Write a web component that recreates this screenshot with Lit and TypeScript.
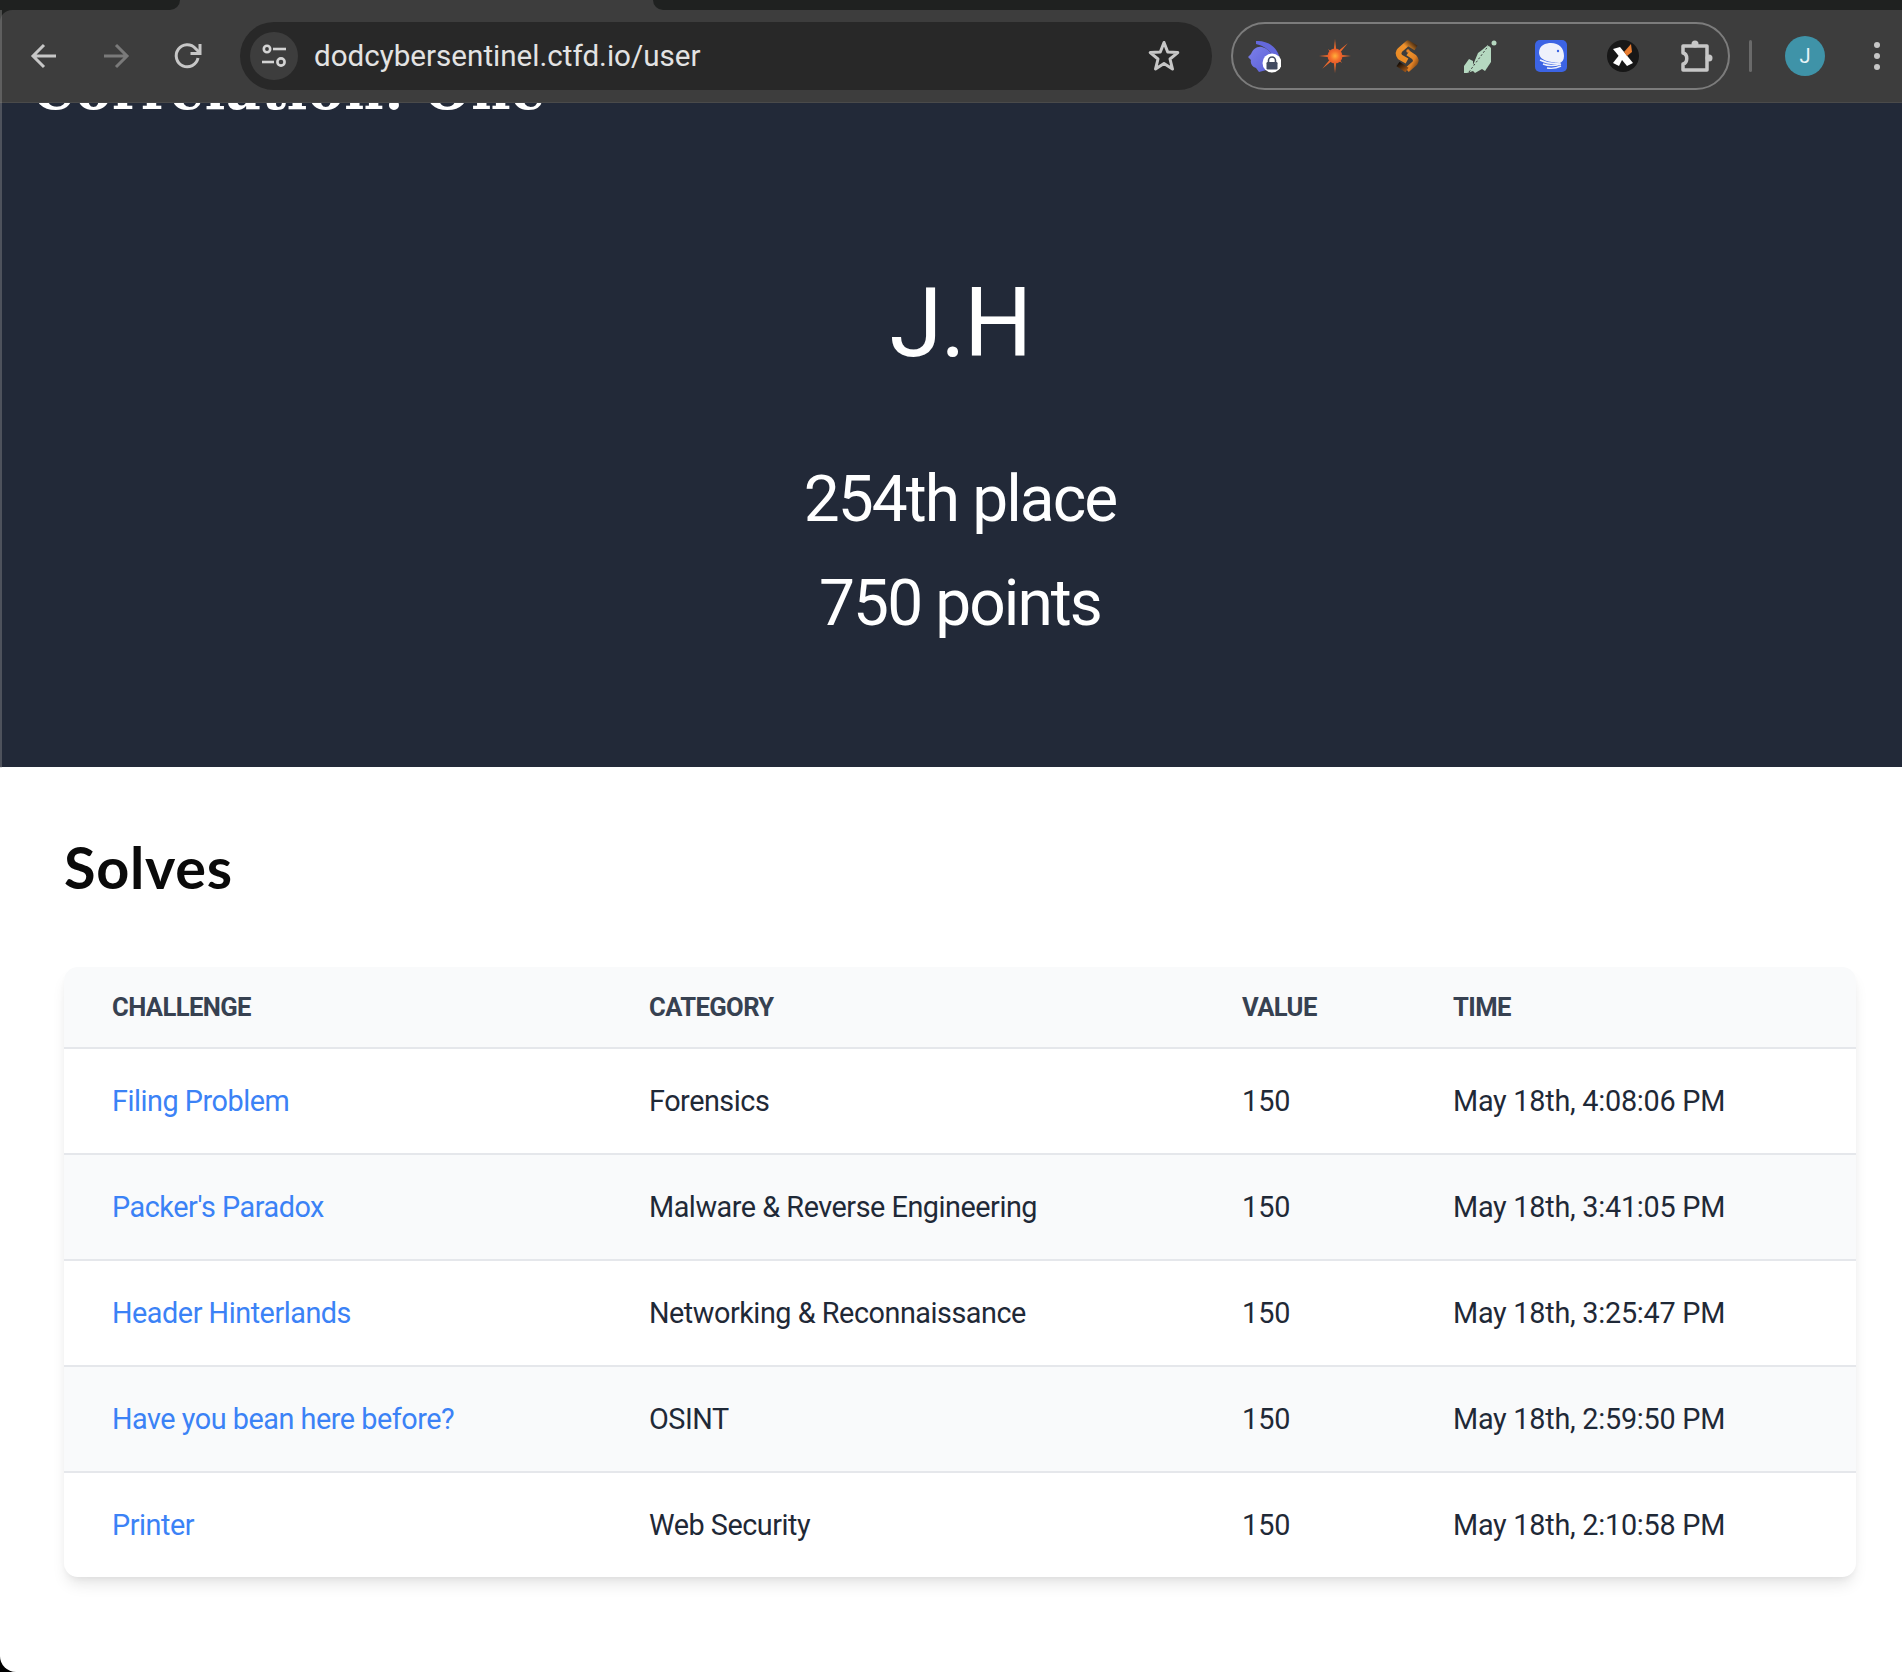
import { LitElement, html, svg, css } from 'lit';
import { customElement } from 'lit/decorators.js';

// thin tapered ray for the burst icon
const ray = (angle: number, len: number) =>
  svg`<polygon points="-1.800,0 0,${-len} 1.800,0" transform="translate(18 18) rotate(${angle})" fill="#ee6a2c"/>`;

const extensionIcons = [
  // rabbit with lock badge
  svg`<svg width="36" height="36" viewBox="0 0 36 36">
    <defs><linearGradient id="rab" x1="0" y1="0" x2="1" y2="1"><stop offset="0" stop-color="#7c80ea"/><stop offset="1" stop-color="#5a5ed6"/></linearGradient></defs>
    <path d="M11 3 C20 2 32 7 35 21 L29 21 C27 14 20 8 11 6 Z" fill="#6468dc"/>
    <path d="M17 9 C25 11 29 18 28 26 C26 31 20 33 14 34 L11 30 C7 29 5 25 6 22 L3 19 L6 16 C8 11 12 8 17 9 Z" fill="url(#rab)"/>
    <circle cx="27" cy="25" r="9.500" fill="#fff"/>
    <path d="M23.500 24 V22.500 a3.500 3.500 0 0 1 7 0 V24" fill="none" stroke="#414a60" stroke-width="1.600"/>
    <rect x="21.500" y="24" width="11" height="7.500" rx="1.200" fill="#414a60"/>
  </svg>`,
  // orange burst
  svg`<svg width="36" height="36" viewBox="0 0 36 36">
    <defs><radialGradient id="burst"><stop offset="0" stop-color="#ffb03a"/><stop offset=".6" stop-color="#f4702c"/><stop offset="1" stop-color="#e4582a"/></radialGradient></defs>
    ${[
      [0, 17],
      [45, 18],
      [90, 16],
      [135, 10],
      [180, 17],
      [225, 18],
      [270, 16],
      [315, 10],
    ].map(([a, l]) => ray(a, l))}
    <circle cx="18" cy="18" r="7.500" fill="url(#burst)"/>
  </svg>`,
  // chain S
  svg`<svg width="36" height="36" viewBox="0 0 36 36">
    <defs>
      <linearGradient id="sa" x1="1" y1="0" x2="0" y2="1"><stop offset="0" stop-color="#2c1a0c"/><stop offset=".4" stop-color="#f0922c"/><stop offset="1" stop-color="#e88a24"/></linearGradient>
      <linearGradient id="sb" x1="0" y1="0" x2="1" y2="1"><stop offset="0" stop-color="#f0962c"/><stop offset=".6" stop-color="#e08024"/><stop offset="1" stop-color="#7a4414"/></linearGradient>
      <linearGradient id="sc" x1="0" y1="0" x2="1" y2="1"><stop offset="0" stop-color="#140c06"/><stop offset="1" stop-color="#9a5418"/></linearGradient>
    </defs>
    <path d="M27 10 L19 5 L11 12 Q8 15 11 19 L18 23" fill="none" stroke="url(#sa)" stroke-width="5.500" stroke-linejoin="round"/>
    <path d="M19 15 L25 19 Q28 22 26 25 L18 32" fill="none" stroke="url(#sb)" stroke-width="5.500" stroke-linejoin="round"/>
    <path d="M9 26 L18 32" fill="none" stroke="url(#sc)" stroke-width="5.500"/>
    <circle cx="19" cy="13" r="1.700" fill="#e8862a"/>
  </svg>`,
  // green leaf strips
  svg`<svg width="36" height="36" viewBox="0 0 36 36">
    <g fill="#b5d8c0">
      <path d="M3 35 V28 L8 21 L12 23 V33 L6 35 Z"/>
      <path d="M12 27 L17 15 L21 12 V31 L14 35 L12 33 Z"/>
      <path d="M21 12 L27 7 L30 10 V24 L24 33 L21 31 Z"/>
      <circle cx="33" cy="5" r="2.500"/>
    </g>
    <path d="M8 34 L28 7" stroke="#3d3d3d" stroke-width="1" stroke-dasharray="2 2" fill="none"/>
  </svg>`,
  // whale on blue
  svg`<svg width="36" height="36" viewBox="0 0 36 36">
    <rect x="2" y="2" width="32" height="32" rx="5" fill="#3c64e4"/>
    <path d="M6 15 C6 7 13 5 18 5 C26 5 31 10 31 18 C31 22 29 24 27 25 C19 24 7 24 6 15 Z" fill="#eef1fb"/>
    <circle cx="25" cy="13" r="1.200" fill="#3c64e4"/>
    <g fill="none" stroke="#eef1fb" stroke-width="1.400">
      <path d="M7 22 C13 25 21 26 27 25"/>
      <path d="M10 26 C15 28 21 28 28 26"/>
      <path d="M14 30 C19 31 24 30 28 28"/>
    </g>
  </svg>`,
  // X with rocket
  svg`<svg width="36" height="36" viewBox="0 0 36 36">
    <circle cx="18" cy="18" r="16" fill="#171717"/>
    <path d="M8 11 L15 9 L28 25 L22 28 Z" fill="#fff"/>
    <path d="M8 25 L15 16 L18 20 L14 28 Z" fill="#fff"/>
    <path d="M26 6 L27 14 L22 18 L19 14 Z" fill="#e87c30"/>
  </svg>`,
  // extension puzzle
  svg`<svg width="36" height="36" viewBox="0 0 36 36">
    <path d="M6 8 H30 V32 H6 V26 C11 25 11 16 6 15 Z" fill="none" stroke="#c7c7c7" stroke-width="3.500" stroke-linejoin="round"/>
    <circle cx="18" cy="6" r="3.500" fill="#c7c7c7"/>
    <circle cx="32" cy="20" r="3.500" fill="#c7c7c7"/>
  </svg>`,
];

@customElement('browser-bar')
export class BrowserBar extends LitElement {
  static styles = css`
    :host {
      display: block;
      width: 1920px;
      background: #1f2120;
    }

    .tabs {
      display: flex;
      justify-content: space-between;
      height: 10px;
      background: #3d3d3d;
    }

    .tab-left {
      width: 180px;
      background: #1f2120;
      border-bottom-right-radius: 12px;
    }

    .tab-right {
      width: 1267px;
      background: #1f2120;
      border-bottom-left-radius: 12px;
    }

    .toolbar {
      display: flex;
      align-items: center;
      height: 93px;
      box-sizing: border-box;
      padding: 0 0 0 8px;
      background: #3d3d3d;
      border-top-left-radius: 12px;
      border-bottom: 1px solid #4a4a4a;
    }

    .nav {
      width: 72px;
      height: 36px;
      display: flex;
      align-items: center;
      justify-content: center;
    }

    .address {
      display: flex;
      align-items: center;
      width: 972px;
      height: 68px;
      margin-left: 16px;
      box-sizing: border-box;
      padding: 0 31px 0 10px;
      background: #282828;
      border-radius: 34px;
    }

    .site-info {
      width: 48px;
      height: 48px;
      flex: none;
      border-radius: 50%;
      background: #3d3d3d;
      display: flex;
      align-items: center;
      justify-content: center;
    }

    .url {
      flex: 1;
      margin-left: 16px;
      font: 400 29.600px Roboto, sans-serif;
      color: #e3e3e3;
    }

    .extensions {
      display: flex;
      gap: 12px;
      margin-left: 19px;
      width: 499px;
      height: 68px;
      box-sizing: border-box;
      border: 2px solid #7c7c7c;
      border-radius: 34px;
    }

    .ext {
      width: 60px;
      display: flex;
      align-items: center;
      justify-content: center;
    }

    .divider {
      width: 3px;
      height: 32px;
      margin-left: 19px;
      border-radius: 2px;
      background: #6a6a6a;
    }

    .avatar {
      width: 40px;
      height: 40px;
      margin-left: 33px;
      border-radius: 50%;
      background: #3f93a8;
      color: #e8f4f7;
      font: 400 20px Roboto, sans-serif;
      display: flex;
      align-items: center;
      justify-content: center;
    }

    .menu {
      display: flex;
      flex-direction: column;
      gap: 5px;
      margin-left: 49px;
    }

    .menu span {
      width: 6px;
      height: 6px;
      border-radius: 50%;
      background: #c7c7c7;
    }
  `;

  render() {
    return html`
      <div class="tabs">
        <div class="tab-left"></div>
        <div class="tab-right"></div>
      </div>
      <div class="toolbar">
        <div class="nav">
          <svg width="28" height="28" viewBox="0 0 28 28"><path d="M26 14 H3 M14 3 L3 14 L14 25" fill="none" stroke="#c7c7c7" stroke-width="3"/></svg>
        </div>
        <div class="nav">
          <svg width="28" height="28" viewBox="0 0 28 28"><path d="M2 14 H25 M14 3 L25 14 L14 25" fill="none" stroke="#7a7a7a" stroke-width="3"/></svg>
        </div>
        <div class="nav">
          <svg width="30" height="30" viewBox="0 0 30 30"><path d="M25 17 A11 11 0 1 1 22.500 7.500 L26 11" fill="none" stroke="#c7c7c7" stroke-width="3"/><path d="M27 3 V12.500 H17.500" fill="none" stroke="#c7c7c7" stroke-width="3"/></svg>
        </div>
        <div class="address">
          <div class="site-info">
            <svg width="28" height="26" viewBox="0 0 28 26">
              <g fill="none" stroke="#d4d4d4" stroke-width="2.600">
                <circle cx="7" cy="6" r="3.200"/>
                <path d="M13 6 H26"/>
                <path d="M2 19 H14"/>
                <circle cx="21" cy="19" r="3.600"/>
              </g>
            </svg>
          </div>
          <span class="url">dodcybersentinel.ctfd.io/user</span>
          <svg width="34" height="34" viewBox="0 0 34 34"><path d="M17 3.500 L20.700 13 L30.800 13.600 L23 20 L25.500 30 L17 24.500 L8.500 30 L11 20 L3.200 13.600 L13.300 13 Z" fill="none" stroke="#c7c7c7" stroke-width="3" stroke-linejoin="round"/></svg>
        </div>
        <div class="extensions">
          ${extensionIcons.map(icon => html`<div class="ext">${icon}</div>`)}
        </div>
        <div class="divider"></div>
        <div class="avatar">J</div>
        <div class="menu"><span></span><span></span><span></span></div>
      </div>
    `;
  }
}

const solves = [
  { name: 'Filing Problem', category: 'Forensics', value: 150, time: 'May 18th, 4:08:06 PM' },
  { name: "Packer's Paradox", category: 'Malware & Reverse Engineering', value: 150, time: 'May 18th, 3:41:05 PM' },
  { name: 'Header Hinterlands', category: 'Networking & Reconnaissance', value: 150, time: 'May 18th, 3:25:47 PM' },
  { name: 'Have you bean here before?', category: 'OSINT', value: 150, time: 'May 18th, 2:59:50 PM' },
  { name: 'Printer', category: 'Web Security', value: 150, time: 'May 18th, 2:10:58 PM' },
];

@customElement('app-root')
export class AppRoot extends LitElement {
  static styles = css`
    :host {
      display: block;
      position: relative;
      width: 1902px;
      height: 1672px;
      overflow: hidden;
      background: #000;
      font-family: Roboto, sans-serif;
    }

    :host::after {
      content: '';
      position: absolute;
      left: 0;
      top: 10px;
      height: 758px;
      width: 2px;
      background: rgba(160, 160, 160, 0.35);
    }

    .page {
      width: 1920px;
      height: 1672px;
      background: #fff;
      border-bottom-left-radius: 16px;
      overflow: hidden;
    }

    .hero {
      background: #222938;
      color: #fff;
      text-align: center;
      overflow: hidden;
      padding-bottom: 111px;
    }

    .brand {
      margin: -43px 0 0 32px;
      font: 700 54px/60px 'DejaVu Serif', serif;
      letter-spacing: 0.5px;
      text-align: left;
    }

    .name {
      margin: 155px 0 0;
      font-size: 96px;
      font-weight: 400;
      line-height: 96px;
      letter-spacing: -0.02em;
    }

    .stats {
      margin-top: 77px;
      font-size: 64px;
      line-height: 104px;
      letter-spacing: -0.03em;
    }

    .solves {
      padding: 0 64px;
    }

    h2 {
      margin: 60px 0 60px;
      font: 700 57.600px/80px Lato, sans-serif;
      letter-spacing: 0.7px;
      color: #0a0a0a;
    }

    .card {
      border-radius: 14px;
      overflow: hidden;
      box-shadow: 0 10px 15px -3px rgba(0, 0, 0, 0.1), 0 4px 6px -2px rgba(0, 0, 0, 0.05);
    }

    table {
      width: 100%;
      table-layout: fixed;
      border-collapse: separate;
      border-spacing: 0;
      color: #1f2937;
    }

    col.c1 { width: 537px; }
    col.c2 { width: 593px; }
    col.c3 { width: 211px; }

    th {
      height: 80px;
      padding: 0 0 0 48px;
      box-sizing: content-box;
      background: #f9fafb;
      border-bottom: 2px solid #e5e7eb;
      color: #374151;
      font-size: 25.600px;
      font-weight: 700;
      letter-spacing: -0.6px;
      text-align: left;
      text-transform: uppercase;
    }

    td {
      height: 104px;
      padding: 0 0 0 48px;
      border-bottom: 2px solid #e5e7eb;
      font-size: 28.800px;
      letter-spacing: -0.47px;
    }

    td.num {
      letter-spacing: 0;
    }

    td.time {
      letter-spacing: -0.25px;
    }

    tr:last-child td {
      border-bottom: none;
    }

    tbody tr:nth-child(even) td {
      background: #f9fafb;
    }

    a {
      color: #3b82f6;
      text-decoration: none;
    }
  `;

  render() {
    return html`
      <div class="page">
        <browser-bar></browser-bar>
        <section class="hero">
          <div class="brand">Correlation: One</div>
          <h1 class="name">J.H</h1>
          <div class="stats">
            <div>254th place</div>
            <div>750 points</div>
          </div>
        </section>
        <section class="solves">
          <h2>Solves</h2>
          <div class="card">
            <table>
              <colgroup><col class="c1" /><col class="c2" /><col class="c3" /><col /></colgroup>
              <thead>
                <tr><th>Challenge</th><th>Category</th><th>Value</th><th>Time</th></tr>
              </thead>
              <tbody>
                ${solves.map(
                  row => html`
                    <tr>
                      <td><a href="#">${row.name}</a></td>
                      <td>${row.category}</td>
                      <td class="num">${row.value}</td>
                      <td class="time">${row.time}</td>
                    </tr>
                  `
                )}
              </tbody>
            </table>
          </div>
        </section>
      </div>
    `;
  }
}

declare global {
  interface HTMLElementTagNameMap {
    'app-root': AppRoot;
    'browser-bar': BrowserBar;
  }
}
